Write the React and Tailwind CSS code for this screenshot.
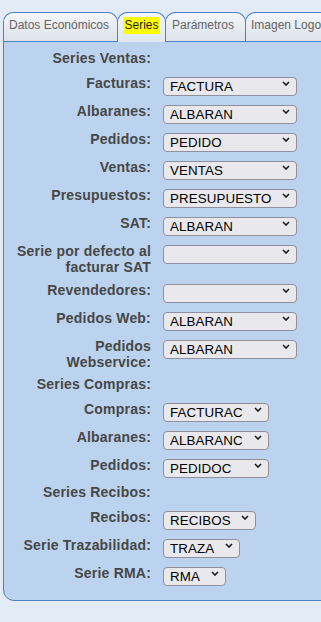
import React from "react";

const sections = [
  {
    title: "Series Ventas:",
    width: "w-[134px]",
    rows: [
      ["Facturas:", "FACTURA"],
      ["Albaranes:", "ALBARAN"],
      ["Pedidos:", "PEDIDO"],
      ["Ventas:", "VENTAS"],
      ["Presupuestos:", "PRESUPUESTO"],
      ["SAT:", "ALBARAN"],
      ["Serie por defecto al facturar SAT", ""],
      ["Revendedores:", ""],
      ["Pedidos Web:", "ALBARAN"],
      ["Pedidos Webservice:", "ALBARAN"],
    ],
  },
  {
    title: "Series Compras:",
    width: "w-[106px]",
    rows: [
      ["Compras:", "FACTURAC"],
      ["Albaranes:", "ALBARANC"],
      ["Pedidos:", "PEDIDOC"],
    ],
  },
  {
    title: "Series Recibos:",
    width: "w-[93px]",
    rows: [["Recibos:", "RECIBOS"]],
  },
];

const extra = [
  ["Serie Trazabilidad:", "TRAZA", "w-[77px]"],
  ["Serie RMA:", "RMA", "w-[63px]"],
];

function Chevron() {
  return (
    <svg width="8" height="5" viewBox="0 0 8 5" className="pointer-events-none absolute right-[7px] top-[7px]">
      <path d="M1 1l3 3 3-3" fill="none" stroke="#1a1a1a" strokeWidth="1.6" />
    </svg>
  );
}

function Select({ value, width }) {
  return (
    <div className={`relative mt-[4px] mb-[5px] h-[19px] shrink-0 ${width}`}>
      <select
        defaultValue={value}
        className="h-full w-full appearance-none rounded-[4px] border border-[#8f8f9d] bg-[#e9e9ed] pl-[6px] pr-5 text-[13.33px] leading-[17px] tracking-[0.1px] text-black outline-none"
      >
        <option value={value}>{value}</option>
      </select>
      <Chevron />
    </div>
  );
}

function Row({ label, value, width }) {
  return (
    <div className="flex items-start gap-3">
      <div className="w-[137px] shrink-0 pt-[5px] pb-[2px] text-right text-[14px] font-bold leading-4 tracking-[0.2px] text-[#474747]">
        {label}
      </div>
      <Select value={value} width={width} />
    </div>
  );
}

function Header({ title }) {
  return (
    <div className="flex h-[24px]">
      <div className="w-[137px] pt-[4px] text-right text-[14px] font-bold leading-4 tracking-[0.2px] text-[#474747]">
        {title}
      </div>
    </div>
  );
}

const tabs = [
  { name: "Datos Económicos", w: "w-[115px]", pl: "pl-[5px]" },
  { name: "Series", w: "w-[49px]", active: true },
  { name: "Parámetros", w: "w-[81px]", pl: "pl-[6px]" },
  { name: "Imagen Logo", w: "w-[90px]", pl: "pl-[5px]" },
];

export default function App() {
  return (
    <div
      className="min-h-[622px] w-[321px] overflow-hidden bg-[#e2ebf6] pt-[12px] pl-[3px]"
      style={{ fontFamily: '"Liberation Sans", Arial, sans-serif' }}
    >
      <div className="w-[340px]">
        <div className="flex h-[29px] items-start">
          {tabs.map((t, i) => (
            <div
              key={t.name}
              className={`${t.w} ${i > 0 ? "-ml-px" : ""} ${
                t.active
                  ? "relative z-10 h-[30px] justify-center bg-gradient-to-b from-[#f4f7fb] to-[#dfe7f1]"
                  : `h-[29px] bg-gradient-to-b from-[#f4f6f9] to-[#dce3ec] ${t.pl}`
              } flex shrink-0 whitespace-nowrap rounded-t-[10px] border-x border-t border-[#4a82c3] pt-[4px] text-[12px] leading-4`}
            >
              {t.active ? (
                <span className="h-[17px] bg-[#ffff00] px-px text-[#1e1e1e]">{t.name}</span>
              ) : (
                <span className="text-[#646464]">{t.name}</span>
              )}
            </div>
          ))}
        </div>
        <div className="rounded-bl-[11px] border border-[#4a82c3] bg-[#bbd3ee] pt-[4px] pb-[12px] pl-[10px]">
          {sections.map((s) => (
            <div key={s.title}>
              <Header title={s.title} />
              {s.rows.map(([label, value]) => (
                <Row key={label + value} label={label} value={value} width={s.width} />
              ))}
            </div>
          ))}
          {extra.map(([label, value, width]) => (
            <Row key={label} label={label} value={value} width={width} />
          ))}
        </div>
      </div>
    </div>
  );
}
